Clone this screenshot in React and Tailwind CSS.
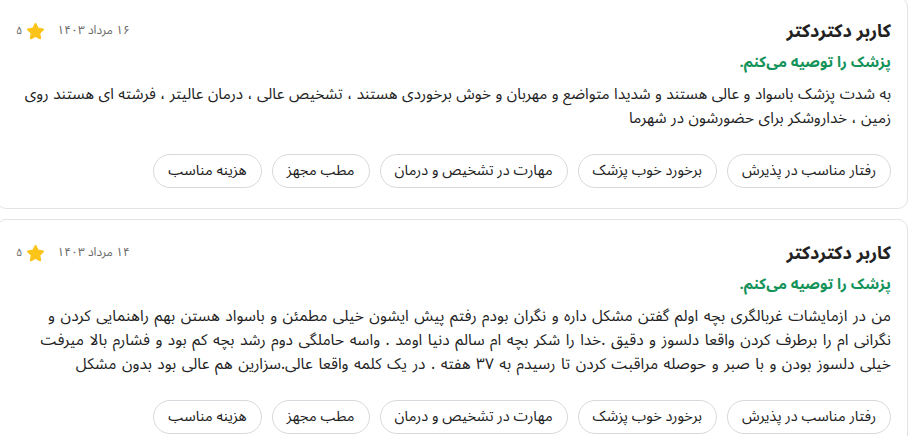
import { Star } from 'lucide-react';

const reviews = [
  {
    id: 1,
    name: "کاربر دکتردکتر",
    date: "۱۶ مرداد ۱۴۰۳",
    rate: "۵",
    body: "text-[15.3px] [word-spacing:0.5px]",
    text: "به شدت پزشک باسواد و عالی هستند و شدیدا متواضع و مهربان و خوش برخوردی هستند ، تشخیص عالی ، درمان عالیتر ، فرشته ای هستند روی زمین ، خداروشکر برای حضورشون در شهرما",
  },
  {
    id: 2,
    name: "کاربر دکتردکتر",
    date: "۱۴ مرداد ۱۴۰۳",
    rate: "۵",
    body: "text-[15.5px] [word-spacing:1.5px]",
    text: "من در ازمایشات غربالگری بچه اولم گفتن مشکل داره و نگران بودم رفتم پیش ایشون خیلی مطمئن و باسواد هستن بهم راهنمایی کردن و نگرانی ام را برطرف کردن واقعا دلسوز و دقیق .خدا را شکر بچه ام سالم دنیا اومد . واسه حاملگی دوم رشد بچه کم بود و فشارم بالا میرفت خیلی دلسوز بودن و با صبر و حوصله مراقبت کردن تا رسیدم به ۳۷ هفته . در یک کلمه واقعا عالی.سزارین هم عالی بود بدون مشکل",
  },
];

const tags = ["رفتار مناسب در پذیرش", "برخورد خوب پزشک", "مهارت در تشخیص و درمان", "مطب مجهز", "هزینه مناسب"];

function ReviewCard({ r }) {
  return (
    <div className="rounded-[10px] border border-[#e3e3e3] bg-white px-4 pt-5 pb-5">
      {/* header */}
      <div className="flex items-center justify-between h-[26px]">
        <h3 className="text-[18px] font-bold text-[#222] leading-[26px]">{r.name}</h3>
        <div className="flex items-center gap-[12px] pl-[3px]">
          <span className="text-[12px] text-[#666]">{r.date}</span>
          <div className="flex items-center gap-[4px]">
            <Star size={19} className="fill-[#fcc419] text-[#fcc419]" strokeWidth={1.5} />
            <span className="text-[11px] text-[#666]">{r.rate}</span>
          </div>
        </div>
      </div>
      <p className="mt-[6px] text-[15px] font-bold leading-6 text-[#14935a]">پزشک را توصیه می‌کنم.</p>
      <p className={`mt-2 leading-6 text-[#222] ${r.body}`}>{r.text}</p>
      <div className="mt-6 flex flex-wrap gap-[10px]">
        {tags.map(t => (
          <span key={t} className="h-[34px] flex items-center rounded-full border border-[#d6d9dd] px-[14px] text-[14.6px] text-[#222]">
            {t}
          </span>
        ))}
      </div>
    </div>
  );
}

export default function App() {
  return (
    <div dir="rtl" className="min-h-screen bg-white overflow-hidden" style={{ fontFamily: '"Noto Sans Arabic", "DejaVu Sans", "Noto Sans", sans-serif' }}>
      <div className="-mt-[3px] -ml-[4px] mr-[1px] flex flex-col gap-[10px]">
        {reviews.map(r => <ReviewCard key={r.id} r={r} />)}
      </div>
    </div>
  );
}
